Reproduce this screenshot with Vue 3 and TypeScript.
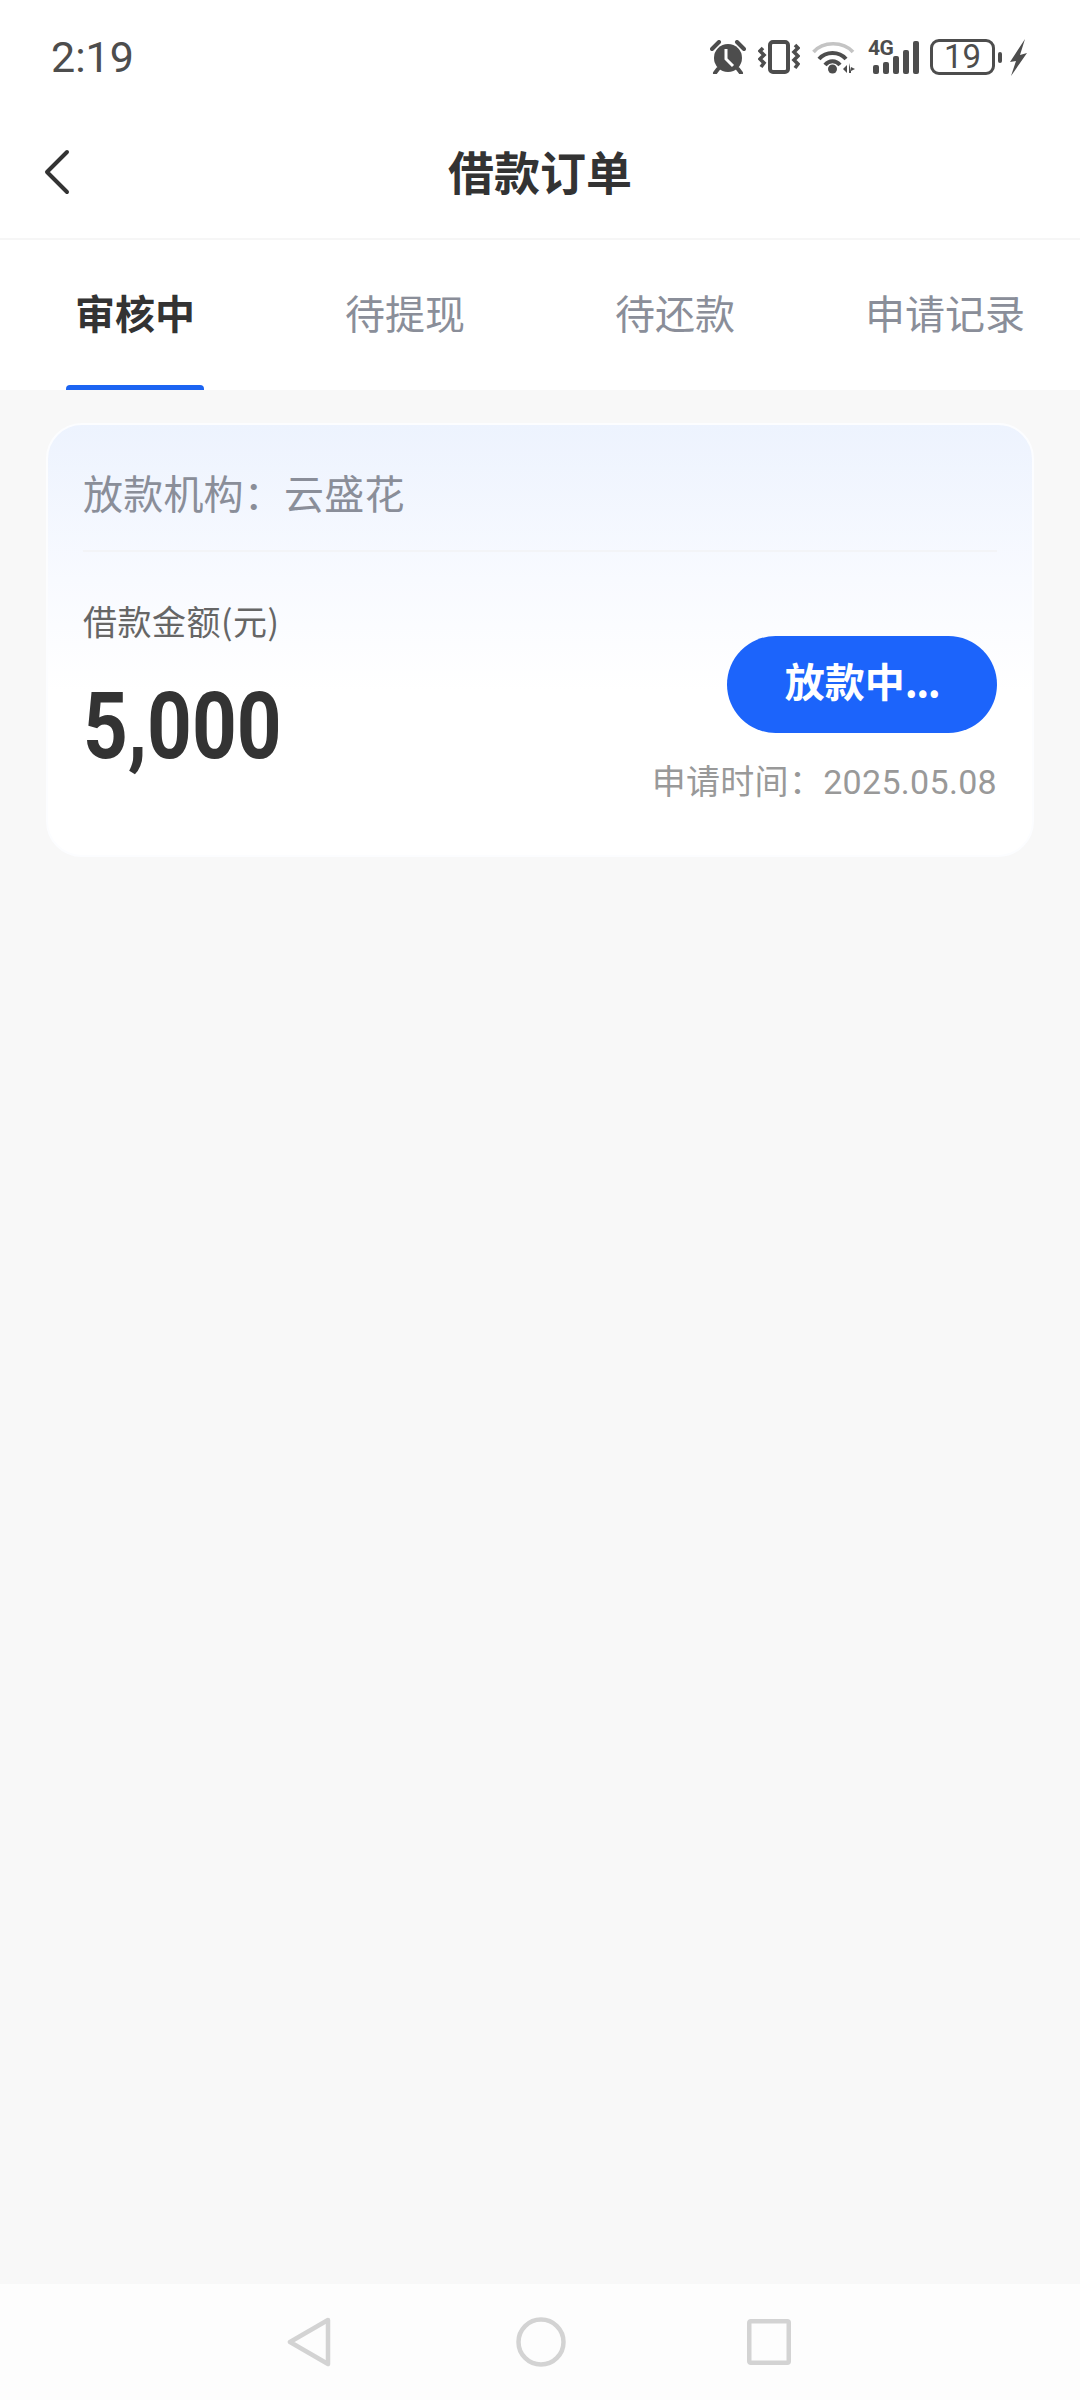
<script setup lang="ts">
import { ref } from 'vue'

const tabs = ref<string[]>(['审核中', '待提现', '待还款', '申请记录'])
const activeTab = ref(0)
</script>

<template>
  <div class="page">
    <!-- status bar -->
    <div class="status-bar">
      <span class="clock">2:19</span>
      <div class="status-icons">
        <svg class="ic-alarm" width="36" height="34" viewBox="0 0 36 34">
          <path d="M2 9 L9 2" class="alarm-ear" />
          <path d="M27 2 L34 9" class="alarm-ear" />
          <circle cx="18" cy="18" r="14" fill="#4d4d4d" />
          <path d="M16 9 V19 L23 26" fill="none" stroke="#fff" stroke-width="3" />
          <path d="M8 29 L5 33 M28 29 L31 33" class="alarm-ear" />
        </svg>
        <svg class="ic-vibrate" width="42" height="34" viewBox="0 0 42 34">
          <rect x="12" y="2" width="18" height="30" rx="3" fill="none" stroke="#4d4d4d" stroke-width="4" />
          <path d="M5 8 L2 11 L6 15 L2 19 L6 23 L3 27" fill="none" stroke="#4d4d4d" stroke-width="3.600" />
          <path d="M37 5 L40 8 L36 12 L40 16 L36 20 L40 24 L37 28" fill="none" stroke="#4d4d4d" stroke-width="3.600" />
        </svg>
        <svg class="ic-wifi" width="44" height="34" viewBox="0 0 44 34">
          <path d="M1.500 12 C11 1 31 1 41 12" fill="none" stroke="#c4c4c4" stroke-width="3.600" />
          <path d="M7 19 C14 11 27 11 34 19" fill="none" stroke="#4d4d4d" stroke-width="4" />
          <path d="M13 25 C17 20 24 20 28 25" fill="none" stroke="#4d4d4d" stroke-width="4" />
          <circle cx="20.500" cy="29" r="4.500" fill="#4d4d4d" />
          <path d="M31 29 L35 25 V33 Z M37 23 V33 H39 V27 L43 29 L39 31 Z" fill="#4d4d4d" />
        </svg>
        <div class="signal">
          <span class="net">4G</span>
          <div class="bars">
            <i style="height: 9px" />
            <i style="height: 12px" />
            <i style="height: 18px" />
            <i style="height: 24px" />
            <i style="height: 33px" />
          </div>
        </div>
        <div class="battery">
          <div class="battery-body">19</div>
          <i class="battery-tip" />
        </div>
        <svg class="ic-bolt" width="17" height="37" viewBox="0 0 17 37">
          <path d="M15 0 L0 23 L6 22 L1 37 L17 14 L10 16 Z" fill="#4d4d4d" />
        </svg>
      </div>
    </div>

    <!-- title -->
    <header class="nav-bar">
      <svg class="back" width="26" height="46" viewBox="0 0 26 46">
        <path d="M23 3 L3 23 L23 43" fill="none" stroke="#333" stroke-width="4" stroke-linecap="round" stroke-linejoin="round" />
      </svg>
      <h1>借款订单</h1>
    </header>

    <!-- tabs -->
    <nav class="tabs">
      <div v-for="(tab, i) in tabs" :key="tab" class="tab" :class="{ active: i === activeTab }">
        <span>{{ tab }}</span>
      </div>
    </nav>

    <main class="content">
      <section class="order-card">
        <div class="org">放款机构：<span class="org-name">云盛花</span></div>
        <div class="order-body">
          <div class="amount-col">
            <p class="amount-label">借款金额(元)</p>
            <p class="amount">5,000</p>
          </div>
          <div class="status-col">
            <div class="status-btn">放款中<span class="dots">...</span></div>
            <p class="apply-time">申请时间：<span>2025.05.08</span></p>
          </div>
        </div>
      </section>
    </main>

    <!-- system navigation -->
    <footer class="sys-nav">
      <svg width="44" height="50" viewBox="0 0 44 50">
        <path d="M41 3 L3 25 L41 47 Z" fill="none" stroke="#d3d3d3" stroke-width="4.500" stroke-linejoin="round" />
      </svg>
      <svg width="50" height="50" viewBox="0 0 50 50">
        <circle cx="25" cy="25" r="22.500" fill="none" stroke="#d3d3d3" stroke-width="4.500" />
      </svg>
      <svg width="44" height="46" viewBox="0 0 44 46">
        <rect x="2.250" y="2.250" width="39.500" height="41.500" rx="1.500" fill="none" stroke="#d3d3d3" stroke-width="4.500" />
      </svg>
    </footer>
  </div>
</template>

<style>
html,
body {
  margin: 0;
  padding: 0;
  background: #f8f8f8;
}
</style>

<style scoped>
* {
  box-sizing: border-box;
  margin: 0;
  padding: 0;
}

.page {
  display: flex;
  flex-direction: column;
  width: 1080px;
  height: 2400px;
  background: #f8f8f8;
  font-family: "Noto Sans CJK SC", "Noto Sans", sans-serif;
  color: #333;
  overflow: hidden;
}

.status-bar {
  display: flex;
  align-items: center;
  justify-content: space-between;
  height: 114px;
  padding: 0 53px 0 51px;
  background: #fff;
}

.clock {
  font-family: Roboto, sans-serif;
  font-size: 43px;
  color: #4d4d4d;
}

.status-icons {
  display: flex;
  align-items: center;
}

.ic-vibrate {
  margin-left: 12px;
}

.ic-wifi {
  margin-left: 12px;
}

.alarm-ear {
  fill: none;
  stroke: #4d4d4d;
  stroke-width: 4;
  stroke-linecap: round;
}

.signal {
  position: relative;
  width: 51px;
  height: 34px;
  margin-left: 12px;
}

.net {
  position: absolute;
  left: 0;
  top: -3px;
  font-family: Roboto, sans-serif;
  font-size: 21px;
  font-weight: 700;
  line-height: 22px;
  letter-spacing: -0.500px;
  color: #4d4d4d;
}

.bars {
  display: flex;
  align-items: flex-end;
  justify-content: flex-end;
  gap: 4px;
  height: 100%;
}

.bars i {
  width: 6px;
  border-radius: 2px;
  background: #4d4d4d;
}

.battery {
  display: flex;
  align-items: center;
  margin-left: 11px;
}

.battery-body {
  width: 65px;
  height: 36px;
  border: 3px solid #4d4d4d;
  border-radius: 9px;
  font-family: Roboto, sans-serif;
  font-size: 33px;
  line-height: 30px;
  text-align: center;
  color: #4d4d4d;
}

.battery-tip {
  width: 4px;
  height: 11px;
  margin-left: 3px;
  border-radius: 2px;
  background: #4d4d4d;
}

.ic-bolt {
  margin-left: 8px;
}

.nav-bar {
  position: relative;
  display: flex;
  align-items: center;
  justify-content: center;
  height: 126px;
  padding-bottom: 13px;
  background: #fff;
  border-bottom: 2px solid #f6f6f6;
}

.back {
  position: absolute;
  left: 44px;
  top: 35px;
}

.nav-bar h1 {
  font-size: 46px;
  font-weight: 700;
  line-height: 60px;
  color: #333;
}

.tabs {
  display: grid;
  grid-template-columns: repeat(4, 1fr);
  height: 150px;
  padding-bottom: 6px;
  background: #fff;
}

.tab {
  position: relative;
  display: flex;
  align-items: center;
  justify-content: center;
  font-size: 40px;
  color: #8a8e99;
}

.tab.active {
  font-weight: 700;
  color: #333;
}

.tab.active::after {
  content: "";
  position: absolute;
  left: 66px;
  bottom: -6px;
  width: 138px;
  height: 5px;
  border-radius: 4px 4px 0 0;
  background: #1c64f2;
}

.content {
  flex: 1;
  padding: 33px 46px 0;
}

.order-card {
  height: 434px;
  padding: 0 35px;
  border: 2px solid #fcfdff;
  border-radius: 36px;
  background: linear-gradient(180deg, #edf3fe 0%, #f8faff 36%, #ffffff 62%);
}

.org {
  height: 127px;
  padding-top: 37px;
  border-bottom: 2px solid #f3f4f7;
  font-size: 40px;
  line-height: 60px;
  letter-spacing: 0.200px;
  color: #8a8e99;
}

.org-name {
  color: #8a8e99;
}

.order-body {
  display: flex;
  justify-content: space-between;
}

.amount-label {
  margin-top: 46px;
  font-size: 34px;
  line-height: 46px;
  letter-spacing: 0.500px;
  color: #666;
}

.amount {
  margin-top: 29px;
  font-family: Roboto, sans-serif;
  font-size: 92px;
  font-weight: 700;
  line-height: 108px;
  color: #333;
  transform: scaleX(0.850);
  transform-origin: left center;
}

.status-col {
  display: flex;
  flex-direction: column;
  align-items: flex-end;
  padding-top: 84px;
}

.status-btn {
  width: 270px;
  height: 97px;
  border-radius: 49px;
  background: #1c64fb;
  font-size: 40px;
  font-weight: 700;
  line-height: 88px;
  text-align: center;
  color: #fff;
}

.dots {
  letter-spacing: -1.500px;
}

.apply-time {
  margin-top: 24px;
  font-size: 34px;
  line-height: 46px;
  letter-spacing: 0.300px;
  color: #999;
}

.apply-time span {
  font-family: Roboto, sans-serif;
}

.sys-nav {
  display: flex;
  align-items: flex-start;
  justify-content: center;
  height: 116px;
  padding: 33px 3px 0 0;
  background: #fdfdfd;
}

.sys-nav svg:first-child {
  margin-right: 185px;
}

.sys-nav svg:last-child {
  margin-top: 2px;
  margin-left: 181px;
}
</style>
